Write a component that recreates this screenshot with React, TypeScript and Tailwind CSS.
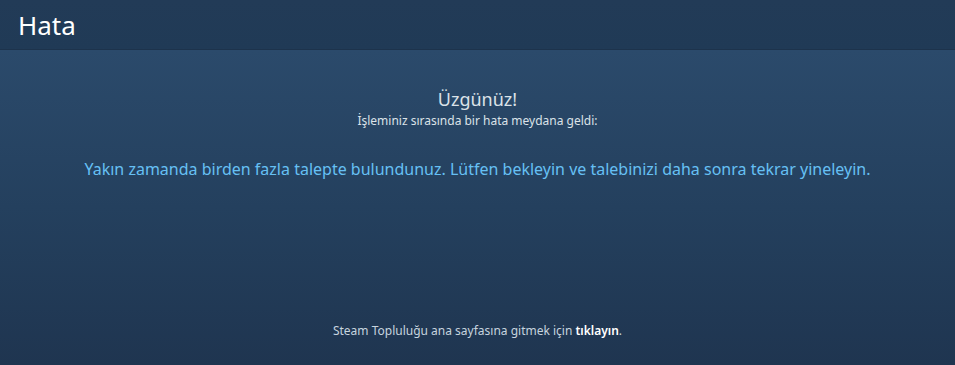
import React from 'react';

const App = () => {
  return (
    <div className="w-[955px] h-[365px] flex flex-col bg-[#1e3450] font-['Noto_Sans',sans-serif]">
      <div className="h-[50px] shrink-0 bg-gradient-to-b from-[#223b57] to-[#203a56] border-b border-[#1d334c] flex items-center px-[18px]">
        <h1 className="text-[26px] text-white leading-none">Hata</h1>
      </div>
      <div className="flex-1 bg-gradient-to-b from-[#2b4a6b] via-[#24405e] to-[#1f3550] flex flex-col items-center">
        <div className="mt-[37px] text-[18px] text-[#dbe2e8] leading-[24px]">Üzgünüz!</div>
        <div className="mt-[2px] text-[12px] text-[#dbe2e8] leading-[16px]">İşleminiz sırasında bir hata meydana geldi:</div>
        <div className="mt-[29px] text-[16px] text-[#66c0f4] leading-[22px]">
          Yakın zamanda birden fazla talepte bulundunuz. Lütfen bekleyin ve talebinizi daha sonra tekrar yineleyin.
        </div>
        <div className="mt-auto mb-[25px] text-[12px] text-[#c6d4df]">
          Steam Topluluğu ana sayfasına gitmek için <span className="text-white font-semibold">tıklayın</span>.
        </div>
      </div>
    </div>
  );
};

export default App;
